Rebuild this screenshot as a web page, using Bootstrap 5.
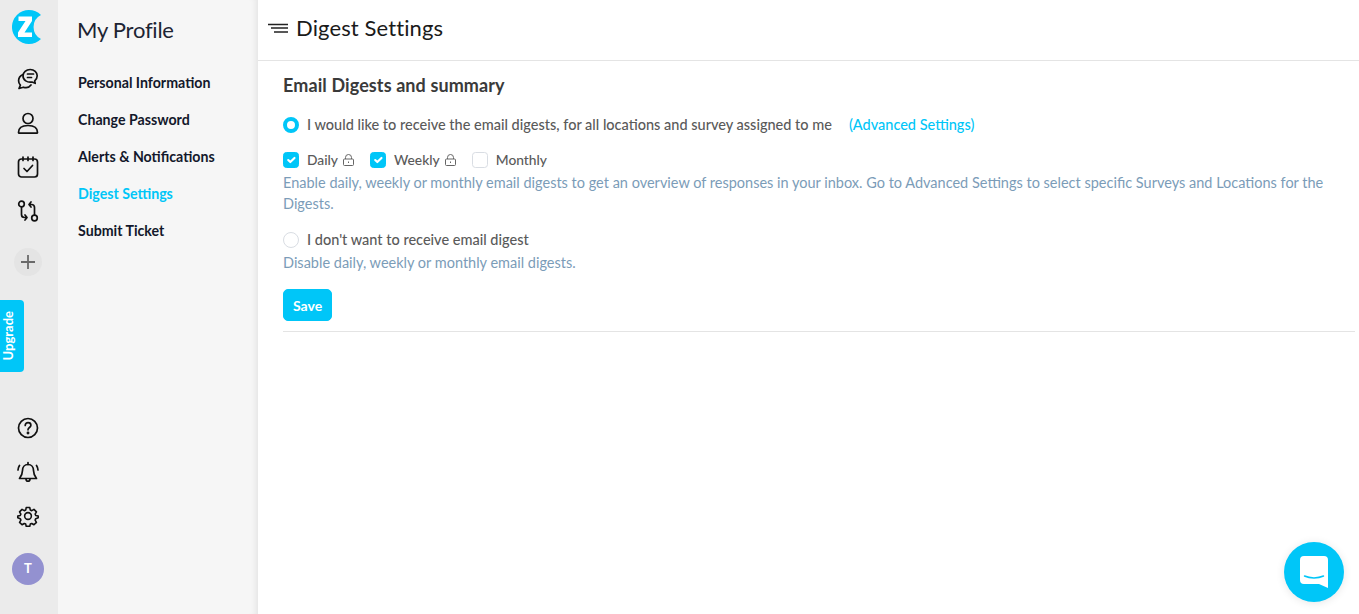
<!DOCTYPE html>
<html lang="en">
<head>
<meta charset="utf-8">
<title>Digest Settings</title>
<link rel="stylesheet" href="https://cdn.jsdelivr.net/npm/bootstrap@5.3.0/dist/css/bootstrap.min.css">
<style>
html,body{height:100%;overflow:hidden}
body{font-family:"Lato","Liberation Sans",sans-serif;background:#fff;color:#4f4f4f}
.shell{height:614px}
.rail{width:58px;background:#ebebeb;flex:none;padding:10px 2px 0 0}
.rail-ico{width:24px;height:24px;color:#111;display:block}
.rail-gear{margin-top:-2px}
.rail-top{gap:20px;margin-top:23px}
.logo-z{width:34px;height:34px;display:block;margin-left:2px}
.plus-btn{width:28px;height:28px;border-radius:50%;background:#e4e4e4;color:#6a6a6a;margin-top:5px}
.upgrade-tab{width:24px;height:72px;background:#00c6f8;color:#fff;border-radius:0 4px 4px 0;font-size:13px;font-weight:700;margin-top:24px;padding-right:6px}
.upgrade-tab span{writing-mode:vertical-rl;transform:rotate(180deg);letter-spacing:0}
.rail-bottom{margin-top:44px;gap:21px}
.avatar-t{width:32px;height:32px;border-radius:50%;background:#9391d0;color:#fff;font-weight:700;font-size:13px;margin-top:4px}
.subnav{width:200px;background:#f6f6f6;flex:none;box-shadow:inset -7px 0 6px -5px rgba(0,0,0,.08);padding:15px 0 0 19px}
.subnav-title{font-size:22px;line-height:30px;color:#1d2433;font-weight:400;letter-spacing:-.25px;margin:0 0 28px}
.subnav-link{display:block;font-size:14.2px;line-height:20px;color:#13182b;font-weight:700;text-decoration:none;margin:0 0 17px 1px;white-space:nowrap}
.subnav-link.on{color:#00c6f8}
.topbar{height:61px;border-bottom:1px solid #e4e4e4;padding-left:10px;gap:8px}
.topbar-title{font-size:22px;font-weight:400;color:#1a1a1a;letter-spacing:.12px;margin:0;line-height:30px;position:relative;top:-2px}
.burger{width:20px;height:14px;position:relative;top:-2px}
.panel{padding:12px 4px 0 25px}
.panel-title{font-size:18px;font-weight:700;color:#3a3a3a;line-height:24px;margin:0 0 18px;letter-spacing:.1px}
.opt{display:flex;align-items:center;font-size:14.5px;line-height:20px;color:#5a5a5a;font-weight:500}
.opt .form-check-input{width:16px;height:16px;margin:0 8px 0 0;flex:none;border-color:#d9dde3;box-shadow:none}
.opt .form-check-input:checked{background-color:#00c6f8;border-color:#00c6f8}
.opt .form-check-input[type=radio]:checked{background-image:none;background-color:#fff;border:4px solid #00c6f8}
.adv{color:#00c6f8;text-decoration:none;margin-left:17px}
.opts-row{margin-top:15px}
.opts-row .opt{margin-right:16px;font-size:13.8px}
.lock{width:11px;height:12px;margin-left:5px;color:#666}
.hint{font-size:14.5px;line-height:21px;color:#7b9cb8;margin:2px 0 0}
.opt-2{margin-top:16px}
.save-btn{--bs-btn-bg:#00c6f8;--bs-btn-border-color:#00c6f8;--bs-btn-color:#fff;--bs-btn-hover-bg:#00c6f8;--bs-btn-hover-color:#fff;--bs-btn-padding-x:9px;--bs-btn-padding-y:0;--bs-btn-font-size:14px;--bs-btn-font-weight:700;--bs-btn-border-radius:5px;height:32px;margin-top:16px;display:block}
.rule-end{border:0;border-top:1px solid #e4e4e4;opacity:1;margin:10px 0 0}
.chat-fab{position:absolute;right:15px;bottom:12px;width:60px;height:60px;border-radius:50%;background:#00c6f8;box-shadow:0 1px 8px rgba(0,0,0,.1)}
</style>
</head>
<body>
<div class="shell d-flex">
  <nav class="rail d-flex flex-column">
    <div class="d-flex flex-column align-items-center">
      <svg class="logo-z" viewBox="0 0 34 34" aria-label="logo"><path d="M29 5A17 17 0 1 0 29 29A13.400 13.400 0 0 1 29 5z" fill="#00c6f8"/><path d="M6.500 6.500h13.500v4.500l-7.500 11.500h7.500v4.500H6v-4.500l7.500-11.500H6.500z" fill="#fff"/></svg>
      <div class="rail-top d-flex flex-column align-items-center">
        <svg class="rail-ico" viewBox="0 0 24 24" fill="none" stroke="currentColor" stroke-width="1.700" stroke-linecap="round" stroke-linejoin="round"><path d="M7 9c0-3.800 3.200-6.500 7.200-6.500s7 2.700 7 6.300c0 2.100-1 3.800-2.500 5l.5 2.500-3.200-1.300c-4.800.9-9-2-9-6z"/><path d="M7 7.500C4.300 8.700 2.600 11 2.600 13.800c0 1.800.7 3.300 1.800 4.400L3 21.500l4.300-1.300c2.800.9 6 .2 7.700-2.200"/><path d="M11.500 7h6M11.500 10.500h4"/></svg>
        <svg class="rail-ico" viewBox="0 0 24 24" fill="none" stroke="currentColor" stroke-width="1.700" stroke-linejoin="round"><circle cx="12" cy="7.500" r="5"/><path d="M2.500 21.500c0-4.500 3.500-7 9.500-7s9.500 2.500 9.500 7c0 .5-.3.700-.8.700H3.300c-.5 0-.8-.2-.8-.7z"/></svg>
        <svg class="rail-ico" viewBox="0 0 24 24" fill="none" stroke="currentColor" stroke-width="1.700" stroke-linecap="round" stroke-linejoin="round"><rect x="2.500" y="4" width="19" height="18" rx="3"/><path d="M7 2v3.500M12 2v3.500M17 2v3.500M8 13.500l3 3 5.500-6"/></svg>
        <svg class="rail-ico" viewBox="0 0 24 24" fill="none" stroke="currentColor" stroke-width="1.700" stroke-linecap="round" stroke-linejoin="round"><circle cx="5.500" cy="5" r="2.800"/><circle cx="18.500" cy="19" r="2.800"/><path d="M5.500 8v7.500c0 2 1 3 3 3h2.500M9 16l2 2.500-2 2.500M18.500 16V8.500c0-2-1-3-3-3h-2.500M15 8l-2-2.500 2-2.500"/></svg>
        <div class="plus-btn d-flex align-items-center justify-content-center">
          <svg width="14" height="14" viewBox="0 0 14 14" stroke="currentColor" stroke-width="1.800"><path d="M7 0v14M0 7h14"/></svg>
        </div>
      </div>
    </div>
    <div class="upgrade-tab d-flex align-items-center justify-content-center"><span>Upgrade</span></div>
    <div class="rail-bottom d-flex flex-column align-items-center">
      <svg class="rail-ico" viewBox="0 0 24 24" fill="none" stroke="currentColor" stroke-width="1.700" stroke-linecap="round"><circle cx="12" cy="12" r="9.500"/><path d="M9.200 9.500c0-1.700 1.200-2.800 2.900-2.800s2.800 1 2.800 2.500c0 2.300-2.900 2.300-2.900 4.600"/><circle cx="12" cy="17" r=".6" fill="currentColor"/></svg>
      <svg class="rail-ico" viewBox="0 0 24 24" fill="none" stroke="currentColor" stroke-width="1.700" stroke-linecap="round" stroke-linejoin="round"><path d="M12 3.500c-3.500 0-5.500 2.500-5.500 6 0 4-1.500 6-3 8h17c-1.500-2-3-4-3-8 0-3.500-2-6-5.500-6z"/><path d="M12 1.500v2M10 18c0 3 4 3 4 0M3.500 4.500C2.500 6 2 7.500 2 9M20.500 4.500c1 1.500 1.500 3 1.500 4.500"/></svg>
      <svg class="rail-ico rail-gear" viewBox="-1.500 -1.500 27 27" fill="none" stroke="currentColor" stroke-width="1.800" stroke-linejoin="round"><circle cx="12" cy="12" r="3.800"/><path d="M10 2.500h4l.6 2.800 1.600.7 2.500-1.500 2.800 2.800-1.500 2.500.7 1.600 2.800.6v2l-2.800 1-.7 1.600 1.500 2.500-2.800 2.800-2.500-1.500-1.600.7-.6 2.400h-4l-.6-2.400-1.600-.7-2.500 1.500-2.800-2.800 1.500-2.500-.7-1.600-2.800-1v-2l2.800-.6.700-1.600-1.500-2.500 2.800-2.800 2.500 1.500 1.600-.7z"/></svg>
      <div class="avatar-t d-flex align-items-center justify-content-center">T</div>
    </div>
  </nav>
  <aside class="subnav">
    <h2 class="subnav-title">My Profile</h2>
    <a class="subnav-link" href="#">Personal Information</a>
    <a class="subnav-link" href="#">Change Password</a>
    <a class="subnav-link" href="#">Alerts &amp; Notifications</a>
    <a class="subnav-link on" href="#">Digest Settings</a>
    <a class="subnav-link" href="#">Submit Ticket</a>
  </aside>
  <main class="flex-grow-1">
    <header class="topbar d-flex align-items-center">
      <svg class="burger" viewBox="0 0 20 14" stroke="#222" stroke-width="1.300"><path d="M0 3.500h20M3 7h17M6 11h14"/></svg>
      <h1 class="topbar-title">Digest Settings</h1>
    </header>
    <section class="panel">
      <h3 class="panel-title">Email Digests and summary</h3>
      <label class="opt"><input class="form-check-input" type="radio" name="dg" checked>I would like to receive the email digests, for all locations and survey assigned to me<a class="adv" href="#">(Advanced Settings)</a></label>
      <div class="opts-row d-flex">
        <label class="opt"><input class="form-check-input" type="checkbox" checked>Daily<svg class="lock" viewBox="0 0 11 12" fill="none" stroke="currentColor"><rect x=".5" y="5" width="10" height="6.500" rx="1"/><path d="M2.500 5V3.500a3 3 0 0 1 6 0V5M5.500 7.500v1.500"/></svg></label>
        <label class="opt"><input class="form-check-input" type="checkbox" checked>Weekly<svg class="lock" viewBox="0 0 11 12" fill="none" stroke="currentColor"><rect x=".5" y="5" width="10" height="6.500" rx="1"/><path d="M2.500 5V3.500a3 3 0 0 1 6 0V5M5.500 7.500v1.500"/></svg></label>
        <label class="opt"><input class="form-check-input" type="checkbox">Monthly</label>
      </div>
      <p class="hint">Enable daily, weekly or monthly email digests to get an overview of responses in your inbox. Go to Advanced Settings to select specific Surveys and Locations for the Digests.</p>
      <label class="opt opt-2"><input class="form-check-input" type="radio" name="dg2">I don't want to receive email digest</label>
      <p class="hint">Disable daily, weekly or monthly email digests.</p>
      <button class="btn save-btn" type="button">Save</button>
      <hr class="rule-end">
    </section>
  </main>
</div>
<div class="chat-fab d-flex align-items-center justify-content-center">
  <svg width="28" height="32" viewBox="0 0 28 32"><path d="M4 0h20a4 4 0 0 1 4 4v28l-9-4H4a4 4 0 0 1-4-4V4a4 4 0 0 1 4-4z" fill="#fff"/><path d="M4.500 20c5.500 2.500 13.500 2.500 19 0" fill="none" stroke="#00c6f8" stroke-width="1.500" stroke-linecap="round"/></svg>
</div>
<script src="https://cdn.jsdelivr.net/npm/bootstrap@5.3.0/dist/js/bootstrap.bundle.min.js"></script>
</body>
</html>
